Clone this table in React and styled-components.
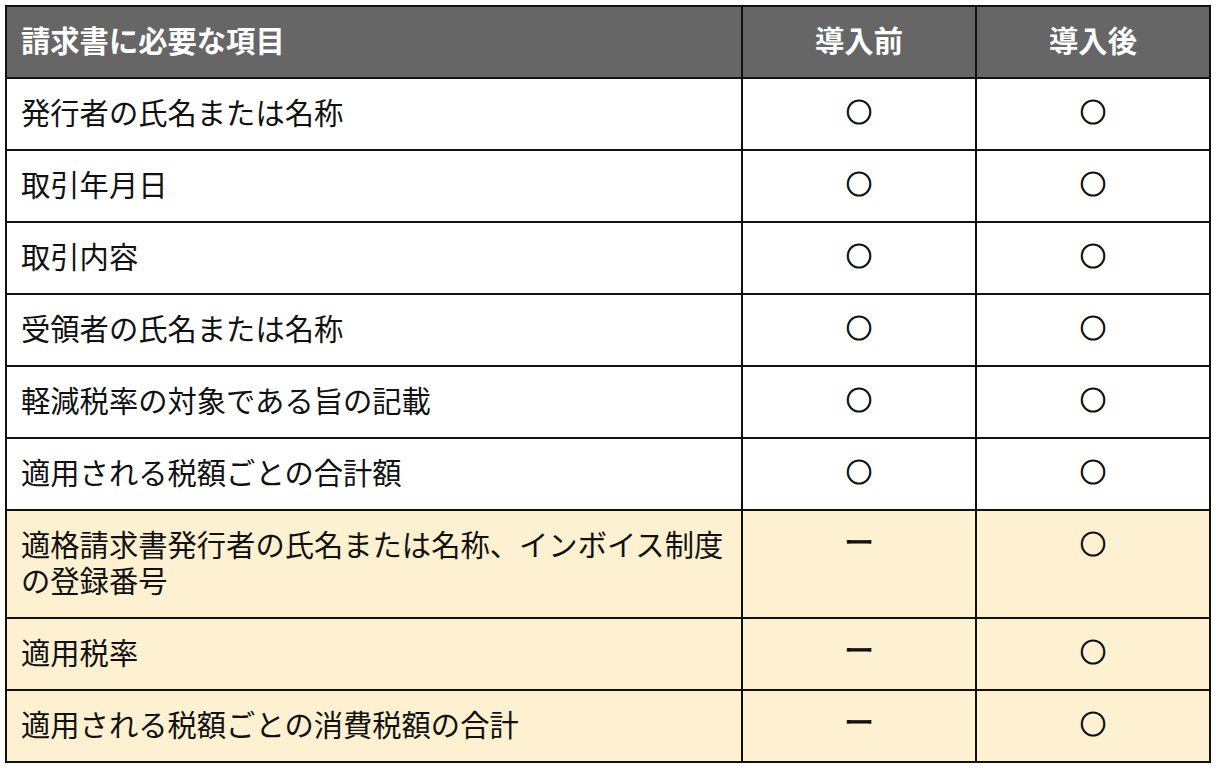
import React from "react"
import styled, { createGlobalStyle } from "styled-components"

const GlobalStyle = createGlobalStyle`
  body {
    margin: 0;
    background: #ffffff;
    font-family: "Noto Sans CJK JP", "Noto Sans", sans-serif;
  }
`

/**
 * Styled Components
 */
const Page = styled.div`
  padding: 5px 5px 0 5px;
`
const Table = styled.table`
  width: 1206px;
  border-collapse: collapse;
  table-layout: fixed;
  color: #111111;
  font-size: 29.3px;
  line-height: 36px;
`
const Col = styled.col`
  width: ${(p) => p.$width};
`
const HeadCell = styled.th`
  background: #666666;
  color: #ffffff;
  font-weight: 700;
  text-align: ${(p) => (p.$center ? "center" : "left")};
  vertical-align: top;
  border: 2px solid #111111;
  padding: 14px 14px 20px;
`
const Row = styled.tr`
  background: ${(p) => (p.$highlight ? "#fdf1d1" : "#ffffff")};
`
const Cell = styled.td`
  text-align: ${(p) => (p.$center ? "center" : "left")};
  vertical-align: top;
  border: 2px solid #111111;
  padding: 14px 14px 20px;
  font-weight: 400;
`
const Mark = styled.span`
  display: inline-block;
  vertical-align: top;
  height: 36px;
  line-height: 36px;
  font-size: 26px;
  -webkit-text-stroke: 1.1px;
  transform: ${(p) => (p.$dash ? "scaleX(1.12) translateY(-2px)" : "none")};
`

const rows = [
  { label: "発行者の氏名または名称", before: "○", after: "○" },
  { label: "取引年月日", before: "○", after: "○" },
  { label: "取引内容", before: "○", after: "○" },
  { label: "受領者の氏名または名称", before: "○", after: "○" },
  { label: "軽減税率の対象である旨の記載", before: "○", after: "○" },
  { label: "適用される税額ごとの合計額", before: "○", after: "○" },
  {
    label: "適格請求書発行者の氏名または名称、インボイス制度の登録番号",
    before: "ー",
    after: "○",
    highlight: true,
  },
  { label: "適用税率", before: "ー", after: "○", highlight: true },
  {
    label: "適用される税額ごとの消費税額の合計",
    before: "ー",
    after: "○",
    highlight: true,
  },
]

/**
 * Main Component
 */
const App = () => {
  return (
    <Page>
      <GlobalStyle />
      <Table>
        <colgroup>
          <Col $width="736px" />
          <Col $width="234px" />
          <Col $width="234px" />
        </colgroup>
        <thead>
          <tr>
            <HeadCell>請求書に必要な項目</HeadCell>
            <HeadCell $center>導入前</HeadCell>
            <HeadCell $center>導入後</HeadCell>
          </tr>
        </thead>
        <tbody>
          {rows.map((r) => (
            <Row key={r.label} $highlight={r.highlight}>
              <Cell>{r.label}</Cell>
              <Cell $center>
                <Mark $dash={r.before === "ー"}>{r.before}</Mark>
              </Cell>
              <Cell $center>
                <Mark $dash={r.after === "ー"}>{r.after}</Mark>
              </Cell>
            </Row>
          ))}
        </tbody>
      </Table>
    </Page>
  )
}

export default App
